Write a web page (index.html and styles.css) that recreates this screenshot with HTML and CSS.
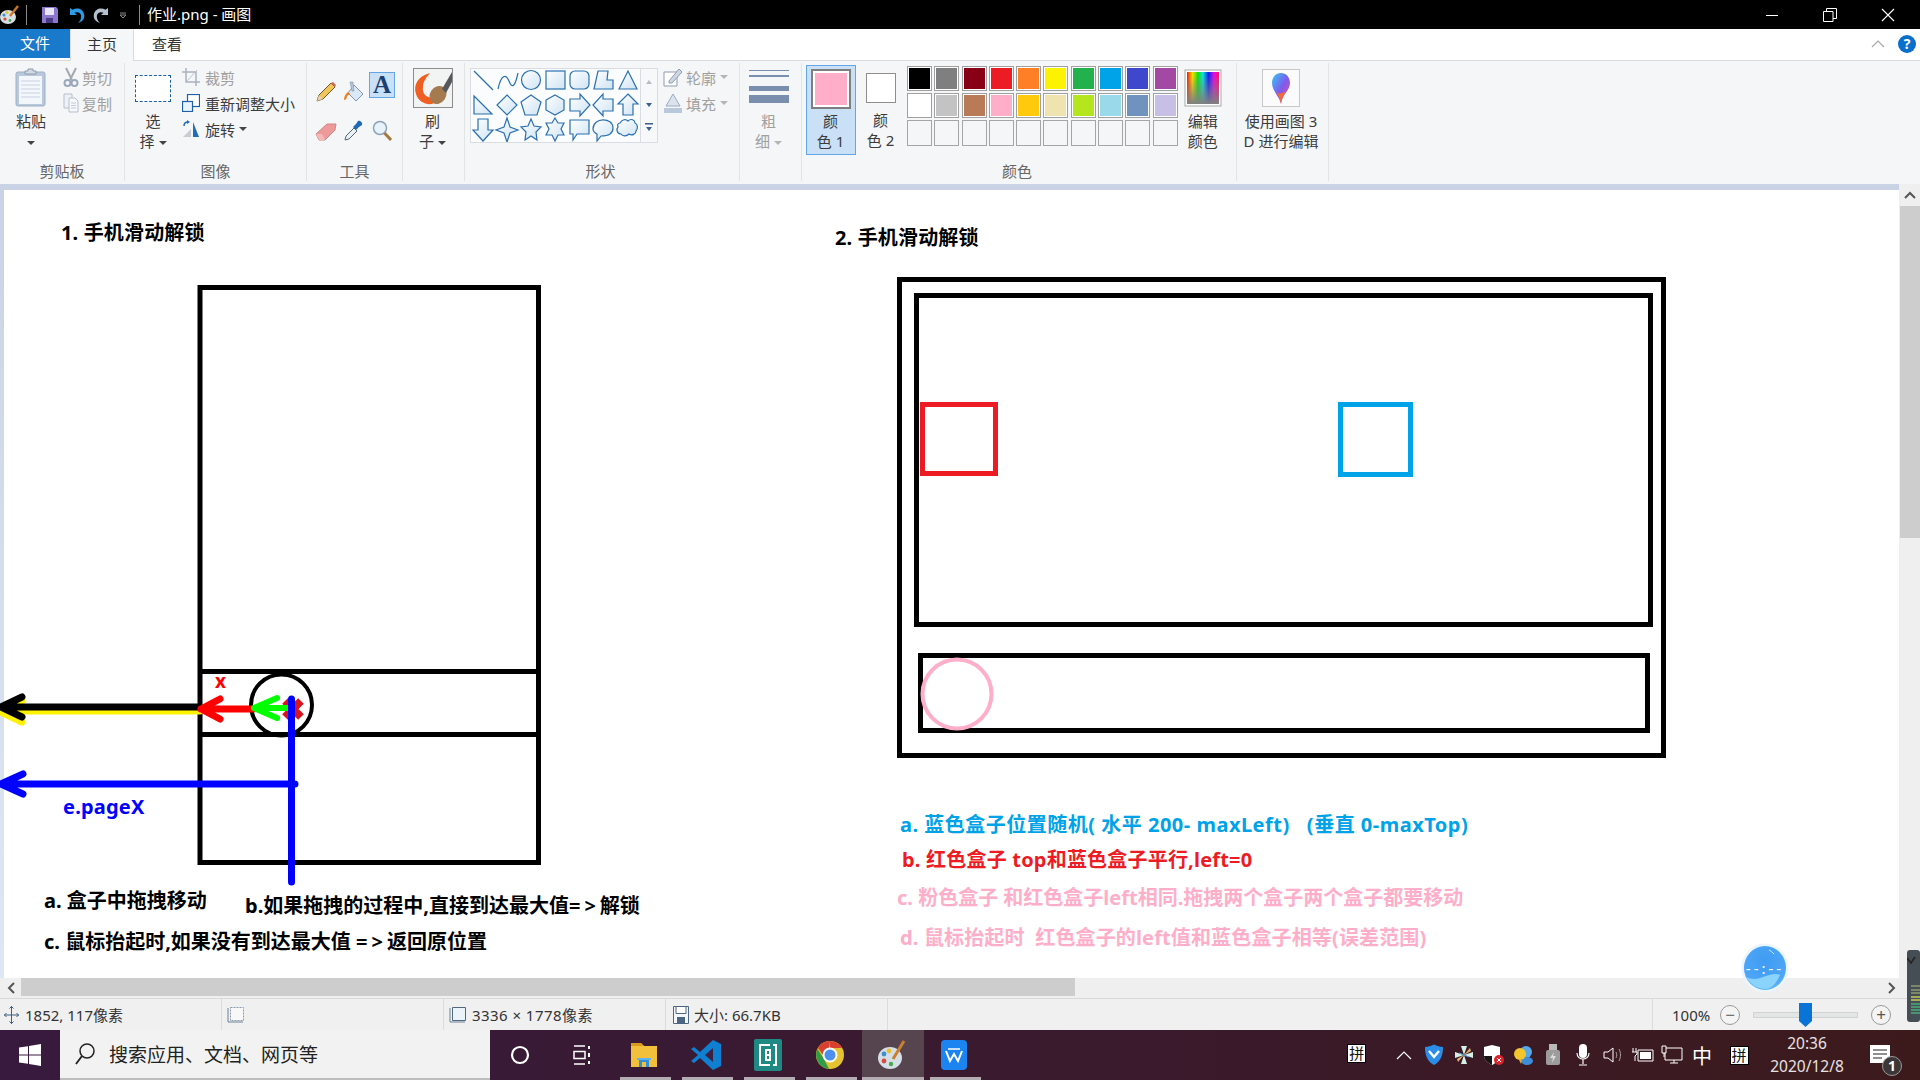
FILE: index.html
```html
<!DOCTYPE html>
<html lang="zh-CN">
<head>
<meta charset="utf-8">
<title>作业.png - 画图</title>
<link rel="stylesheet" href="styles.css">
</head>
<body>
<div class="app">
  <svg width="0" height="0" class="defs">
    <defs>
      <linearGradient id="shapeFill" x1="0" y1="0" x2="1" y2="1"><stop offset="0" stop-color="#ffffff"/><stop offset="1" stop-color="#cfe3f3"/></linearGradient>
      <linearGradient id="rainbow" x1="0" y1="0" x2="1" y2="0"><stop offset="0" stop-color="#ff1010"/><stop offset=".17" stop-color="#ffe000"/><stop offset=".34" stop-color="#10e010"/><stop offset=".5" stop-color="#10e0e0"/><stop offset=".67" stop-color="#1020f0"/><stop offset=".84" stop-color="#e010e0"/><stop offset="1" stop-color="#ff1060"/></linearGradient>
      <linearGradient id="fadeGray" x1="0" y1="0" x2="0" y2="1"><stop offset=".1" stop-color="#808080" stop-opacity="0"/><stop offset="1" stop-color="#808080"/></linearGradient>
      <linearGradient id="dropFill" x1="0" y1="0" x2="1" y2="1"><stop offset="0" stop-color="#35c9f0"/><stop offset=".5" stop-color="#7c5cf0"/><stop offset="1" stop-color="#f24f8e"/></linearGradient>
      <radialGradient id="ballFill" cx=".5" cy=".35" r=".75"><stop offset="0" stop-color="#3f9cf3"/><stop offset=".7" stop-color="#4ea6f6"/><stop offset="1" stop-color="#6cc4fb"/></radialGradient>
    </defs>
  </svg>

  <header class="titlebar">
    <svg class="qa-logo" width="20" height="20" viewBox="0 0 20 20"><ellipse cx="8" cy="12" rx="8" ry="7" fill="#d7e0e6"/><circle cx="4" cy="10" r="1.6" fill="#3f8fd0"/><circle cx="7" cy="7.5" r="1.6" fill="#e8c030"/><circle cx="5" cy="14" r="1.6" fill="#d84a3a"/><circle cx="10" cy="15.5" r="1.4" fill="#48a850"/><path d="M10 11 L18 1" stroke="#c8762a" stroke-width="2.4"/></svg>
    <span class="qa-sep qa-sep-a"></span>
    <svg class="qa-icon" width="18" height="18" viewBox="0 0 18 18"><path d="M1 1h14l2 2v14H1z" fill="#8f76cf"/><path d="M4 2h9v7H4z" fill="#e9e6f6"/><path d="M5 12h7v5H5z" fill="#4a3c86"/></svg>
    <svg class="qa-icon" width="18" height="18" viewBox="0 0 18 18"><path d="M3 2v7h7L7.500 6.800C11 5 15 7 14 12c-.4 2-1.400 3.500-3 5 5-1.500 7-5 6-9-1-5-7-7-11.500-4.200z" fill="#2e9be6"/></svg>
    <svg class="qa-icon" width="18" height="18" viewBox="0 0 18 18"><path d="M15 2v7H8l2.500-2.200C7 5 3 7 4 12c.4 2 1.400 3.500 3 5-5-1.500-7-5-6-9 1-5 7-7 11.500-4.200z" fill="#b4c2cf"/></svg>
    <svg class="qa-small" width="8" height="8" viewBox="0 0 8 8"><path d="M1 1h6M1 3l3 3 3-3z" fill="none" stroke="#8a8a8a"/></svg>
    <span class="qa-sep"></span>
    <span class="title-text">作业.png - 画图</span>
    <div class="win-ctrls">
      <svg width="14" height="14" viewBox="0 0 14 14" class="wc"><path d="M1 7.500h12" stroke="#fff" stroke-width="1"/></svg>
      <svg width="14" height="14" viewBox="0 0 14 14" class="wc"><path d="M.5 3.500h9.500v10h-9.500zM3.500 3V.500h10v10h-3.500" fill="none" stroke="#fff"/></svg>
      <svg width="14" height="14" viewBox="0 0 14 14" class="wc"><path d="M1 1l12 12M13 1L1 13" stroke="#fff" stroke-width="1.100"/></svg>
    </div>
  </header>

  <nav class="tabs">
    <span class="tab tab-file">文件</span>
    <span class="tab tab-home">主页</span>
    <span class="tab tab-view">查看</span>
    <svg class="tab-collapse" width="14" height="8" viewBox="0 0 14 8"><path d="M1 7l6-6 6 6" fill="none" stroke="#a8a8a8" stroke-width="1.200"/></svg>
    <span class="help">?</span>
  </nav>

  <section class="ribbon">
    <div class="group g-clip">
      <div class="group-body">
        <div class="big w-paste">
          <div class="big-icon"><svg width="34" height="40" viewBox="0 0 34 40"><rect x="2" y="4" width="29" height="34" rx="2" fill="#b9c8da" stroke="#9fb0c6"/><rect x="5" y="8" width="23" height="28" fill="#f3f6fb"/><path d="M7 13h19M7 17h19M7 21h19M7 25h19M7 29h19" stroke="#c6d3e4"/><path d="M11 6h11V3h-3V1h-5v2h-3z" fill="#d3dbe6" stroke="#8d9aac"/></svg></div>
          <span class="big-line">粘贴</span>
          <span class="big-line"><i class="caret"></i></span>
        </div>
        <div class="col col-clip">
          <div class="row off"><span class="row-ic"><svg width="16" height="20" viewBox="0 0 16 20"><path d="M3 1l6 12M13 1L7 13" stroke="#a4a9b1" stroke-width="2"/><circle cx="4.500" cy="16" r="3" fill="none" stroke="#9ba7bb" stroke-width="2"/><circle cx="11.500" cy="16" r="3" fill="none" stroke="#9ba7bb" stroke-width="2"/></svg></span>剪切</div>
          <div class="row off"><span class="row-ic"><svg width="16" height="20" viewBox="0 0 16 20"><path d="M1 1h8v14H1z" fill="#eef1f6" stroke="#b5bfce"/><path d="M6 5h6l3 3v11H6z" fill="#f6f8fb" stroke="#b5bfce"/><path d="M8 10h5M8 12.500h5M8 15h5" stroke="#c2cbd8"/></svg></span>复制</div>
        </div>
      </div>
      <div class="group-label">剪贴板</div>
    </div>

    <div class="group g-image">
      <div class="group-body">
        <div class="big w-select">
          <div class="big-icon"><span class="select-box"></span></div>
          <span class="big-line">选</span>
          <span class="big-line">择<i class="caret side"></i></span>
        </div>
        <div class="col col-image">
          <div class="row off"><span class="row-ic"><svg width="18" height="18" viewBox="0 0 18 18"><path d="M4 0v14h14M0 4h14v14" fill="none" stroke="#a9b2bf" stroke-width="1.500"/><path d="M5 13L15 2" stroke="#bbc3ce"/></svg></span>裁剪</div>
          <div class="row"><span class="row-ic"><svg width="18" height="18" viewBox="0 0 18 18"><rect x="5.500" y=".5" width="12" height="12" fill="#fff" stroke="#1e5fa8" stroke-width="1.200"/><rect x=".5" y="7.500" width="10" height="10" fill="#eaf3fb" stroke="#1e5fa8" stroke-width="1.200"/></svg></span>重新调整大小</div>
          <div class="row"><span class="row-ic"><svg width="18" height="18" viewBox="0 0 18 18"><path d="M1 17L9 9v8z" fill="#c9cdd2"/><path d="M11 2l6 15h-6z" fill="#1f6fb8"/><path d="M2 6c0-3 1-4 4-4" fill="none" stroke="#1f6fb8" stroke-width="1.500"/><path d="M5 0l3 2-3 2z" fill="#1f6fb8"/></svg></span>旋转<i class="caret side"></i></div>
        </div>
      </div>
      <div class="group-label">图像</div>
    </div>

    <div class="group g-tools">
      <div class="group-body tools-grid">
        <span class="tool"><svg width="22" height="22" viewBox="0 0 22 22"><path d="M2 20l2-6L16 2l4 4L8 18z" fill="#f0c65a" stroke="#6d5a2c"/><path d="M16 2l4 4 1-2-3-3z" fill="#d9665a"/><path d="M2 20l2-6 4 4z" fill="#e8d0a8"/></svg></span>
        <span class="tool"><svg width="22" height="22" viewBox="0 0 22 22"><path d="M11 4l9 9-7 7-8-8z" fill="#dbe9f6" stroke="#7e95b3"/><path d="M7 1h3l1 9H9z" fill="#b6c4d4" stroke="#7e95b3" stroke-width=".6"/><path d="M5 11c-3 2-4 5-4 8 2 0 3-2 3-4l3-2z" fill="#ef7d21"/></svg></span>
        <span class="tool tool-on"><span class="tool-a">A</span></span>
        <span class="tool"><svg width="22" height="22" viewBox="0 0 22 22"><path d="M1 14L12 4h9l-1 6L10 20H4z" fill="#ef9a9a" stroke="#d08585"/><path d="M1 14l3 6h6l-3-6z" fill="#f4b9b6"/></svg></span>
        <span class="tool"><svg width="22" height="22" viewBox="0 0 22 22"><path d="M2 20l1-4 8-8 3 3-8 8z" fill="#e8f0f8" stroke="#5a6570"/><path d="M10 7l3-3 2-3c2-1 5 2 4 4l-3 2-3 3z" fill="#1f69b5"/></svg></span>
        <span class="tool"><svg width="22" height="22" viewBox="0 0 22 22"><circle cx="9" cy="8" r="6.500" fill="#e8f2fb" stroke="#8ea2b7" stroke-width="1.500"/><path d="M13.500 13l6.500 7" stroke="#a5773f" stroke-width="3"/></svg></span>
      </div>
      <div class="group-label">工具</div>
    </div>

    <div class="group g-brush">
      <div class="group-body">
        <div class="big w-brush">
          <div class="big-icon"><svg width="40" height="40" viewBox="0 0 40 40"><rect x=".5" y=".5" width="39" height="39" fill="#f2f3f3" stroke="#8d8d8d"/><path d="M17 5C5 8 0 17 3 26c2 7 9 11 16 10 3-1 3-4 0-6-6-1-10-4-9-11 0-6 4-10 7-14z" fill="#ef5f22"/><ellipse cx="25" cy="27" rx="8" ry="9.500" transform="rotate(35 25 27)" fill="#a57a4f"/><path d="M29 21L39 4v10l-6 11z" fill="#55585c"/></svg></div>
          <span class="big-line">刷</span>
          <span class="big-line">子<i class="caret side"></i></span>
        </div>
      </div>
      <div class="group-label">工具</div>
    </div>

    <div class="group g-shapes">
      <div class="group-body">
        <div class="gallery">
          <svg width="170" height="75" viewBox="0 0 170 75">
            <g class="sh">
              <path d="M4 3l19 19"/>
              <path class="nf" d="M28 21c3-14 8-16 11-8s6 6 9-8"/>
              <ellipse cx="61" cy="12" rx="9.500" ry="9.500"/>
              <rect x="76" y="3" width="19" height="18"/>
              <rect x="100" y="3" width="19" height="18" rx="5"/>
              <path d="M124 21l4-18h10l-1 9h6v9z"/>
              <path d="M149 21l9-18 9 18z"/>
              <path d="M4 28l18 18H4z"/>
              <path d="M37 27l10 10-10 10-10-10z"/>
              <path d="M61 27l10 7-4 13H55l-4-13z"/>
              <path d="M85 27l9 5v10l-9 5-9-5V32z"/>
              <path d="M100 31h10v-5l10 11-10 11v-5h-10z"/>
              <path d="M143 31h-10v-5l-10 11 10 11v-5h10z"/>
              <path d="M158 26l10 10h-5v11h-10V36h-5z"/>
              <path d="M8 51h10v11h5L13 73 3 62h5z"/>
              <path d="M37 50l3 9 8 3-8 3-3 9-3-9-8-3 8-3z"/>
              <path d="M61 51l3 7 7 1-5 5 1 8-6-4-6 4 1-8-5-5 7-1z"/>
              <path d="M85 50l3 5 6 0-3 6 3 6-6 0-3 6-3-6-6 0 3-6-3-6 6 0z"/>
              <path d="M100 52h19v14h-12l-4 6v-6h-3z"/>
              <path d="M123 61c0-12 20-12 20-1 0 8-10 8-12 8l-4 5 0-7c-2-1-4-3-4-5z"/>
              <path d="M150 55c2-4 6-4 8-2 3-3 7-1 7 2 3 1 3 6 1 8 0 3-4 5-7 3-2 2-6 3-8 0-4 0-5-5-3-7-1-2 0-4 2-4z"/>
            </g>
          </svg>
        </div>
        <div class="gallery-scroll">
          <svg width="18" height="75" viewBox="0 0 18 75"><path d="M6 16l3-4 3 4z" fill="#b8bdc4"/><path d="M6 35l3 4 3-4z" fill="#3f5f90"/><path d="M5 55h8v1.500H5zM6 59h6l-3 4z" fill="#3f5f90"/></svg>
        </div>
        <div class="col col-shape">
          <div class="row off"><span class="row-ic"><svg width="20" height="20" viewBox="0 0 20 20"><path d="M1 5h13v14H1z" fill="#fff" stroke="#8d9cb0"/><path d="M6 14L16 2l3 3L9 16H6z" fill="#cfd7e2" stroke="#8d9cb0"/></svg></span>轮廓<i class="caret side pale"></i></div>
          <div class="row off"><span class="row-ic"><svg width="20" height="20" viewBox="0 0 20 20"><path d="M1 15h18v5H1z" fill="#b9c8dc"/><path d="M10 1l7 12H3z" fill="#dbe3ee" stroke="#9cabc0"/></svg></span>填充<i class="caret side pale"></i></div>
        </div>
      </div>
      <div class="group-label label-shapes">形状</div>
    </div>

    <div class="group g-size">
      <div class="group-body">
        <div class="big w-size off-text">
          <div class="big-icon top"><span class="size-lines"><i class="l1"></i><i class="l2"></i><i class="l3"></i><i class="l4"></i></span></div>
          <span class="big-line">粗</span>
          <span class="big-line">细<i class="caret side pale"></i></span>
        </div>
      </div>
      <div class="group-label hidden-label">粗细</div>
    </div>

    <div class="group g-colors">
      <div class="group-body">
        <div class="big color-btn on">
          <div class="big-icon"><span class="swatch-big"></span></div>
          <span class="big-line">颜</span>
          <span class="big-line">色 1</span>
        </div>
        <div class="big color-btn">
          <div class="big-icon"><span class="swatch-2"></span></div>
          <span class="big-line">颜</span>
          <span class="big-line">色 2</span>
        </div>
        <div class="palette">
          <i class="c c1"></i><i class="c c2"></i><i class="c c3"></i><i class="c c4"></i><i class="c c5"></i><i class="c c6"></i><i class="c c7"></i><i class="c c8"></i><i class="c c9"></i><i class="c c10"></i>
          <i class="c c11"></i><i class="c c12"></i><i class="c c13"></i><i class="c c14"></i><i class="c c15"></i><i class="c c16"></i><i class="c c17"></i><i class="c c18"></i><i class="c c19"></i><i class="c c20"></i>
          <i class="c e"></i><i class="c e"></i><i class="c e"></i><i class="c e"></i><i class="c e"></i><i class="c e"></i><i class="c e"></i><i class="c e"></i><i class="c e"></i><i class="c e"></i>
        </div>
        <div class="big w-edit">
          <div class="big-icon"><svg width="38" height="38" viewBox="0 0 38 38"><rect x="1" y="1" width="36" height="36" fill="#fff" stroke="#a8a8a8"/><rect x="3" y="3" width="32" height="32" fill="url(#rainbow)"/><rect x="3" y="3" width="32" height="32" fill="url(#fadeGray)"/></svg></div>
          <span class="big-line">编辑</span>
          <span class="big-line">颜色</span>
        </div>
      </div>
      <div class="group-label label-colors">颜色</div>
    </div>

    <div class="group g-3d">
      <div class="group-body">
        <div class="big w-3d">
          <div class="big-icon"><svg width="38" height="38" viewBox="0 0 38 38"><rect x=".5" y=".5" width="37" height="37" fill="#fbfbfb" stroke="#c8c8c8"/><path d="M19 35c-1-7-9-13-9-21 0-6 4-10 9-10s9 4 9 10c0 8-8 11-9 21z" fill="url(#dropFill)"/><path d="M19 35c-1-6-3-9-5-12 4 3 7 1 10-1-2 4-4 7-5 13z" fill="#f46b3c"/></svg></div>
          <span class="big-line">使用画图 3</span>
          <span class="big-line">D 进行编辑</span>
        </div>
      </div>
      <div class="group-label hidden-label">画图 3D</div>
    </div>
    <div class="ribbon-rest"></div>
  </section>

  <section class="workspace">
    <div class="work-top">
      <div class="pane">
        <div class="canvas">
          <svg class="drawing" width="1895" height="788" viewBox="4 190 1895 788">
            <g class="bk">
              <rect x="200" y="287.500" width="338.500" height="575"/>
              <path d="M198 671.500H541M198 734.500H541"/>
              <circle class="thin" cx="281.500" cy="705" r="30.500"/>
              <rect x="899.500" y="279.500" width="764" height="476"/>
              <rect x="916.500" y="295.500" width="734" height="329"/>
              <rect x="920.500" y="655.500" width="727" height="75"/>
            </g>
            <rect class="rd" x="922.500" y="404.500" width="73" height="69"/>
            <rect class="bl" x="1340.500" y="404.500" width="70" height="70"/>
            <circle class="pk" cx="957" cy="694" r="34.500"/>
            <path class="yl" d="M1 711H200M22 701L1 712 22 722"/>
            <path class="ak" d="M1 707H198M22 697L1 707 22 717"/>
            <path class="xr" d="M285 701L301 717M301 701L285 717"/>
            <path class="ar" d="M201 709H253M220 699L201 709 220 719"/>
            <path class="ag" d="M254 708H291M277 698L254 708 277 718"/>
            <path class="ab" d="M291.500 699V882M1 784H295M23 774L1 784 23 794"/>
          </svg>
          <span class="lb t-title1">1. 手机滑动解锁</span>
          <span class="lb t-title2">2. 手机滑动解锁</span>
          <span class="lb t-x">x</span>
          <span class="lb t-pagex">e.pageX</span>
          <span class="lb t-a">a. 盒子中拖拽移动</span>
          <span class="lb t-b">b.如果拖拽的过程中,直接到达最大值<span class="wide">=&gt;</span>解锁</span>
          <span class="lb t-c">c. 鼠标抬起时,如果没有到达最大值 <span class="wide">=&gt;</span>返回原位置</span>
          <span class="lb r-a">a. 蓝色盒子位置随机( 水平 200- maxLeft)&nbsp;&nbsp; (垂直 0-maxTop)</span>
          <span class="lb r-b">b. 红色盒子 top和蓝色盒子平行,left=0</span>
          <span class="lb r-c">c. 粉色盒子 和红色盒子left相同.拖拽两个盒子两个盒子都要移动</span>
          <span class="lb r-d">d. 鼠标抬起时&nbsp; 红色盒子的left值和蓝色盒子相等(误差范围)</span>
        </div>
      </div>
      <div class="vscroll">
        <span class="sb-btn"><svg width="12" height="8" viewBox="0 0 12 8"><path d="M1 7l5-5 5 5" fill="none" stroke="#555" stroke-width="2"/></svg></span>
        <span class="vthumb"></span>
      </div>
    </div>
    <div class="hscroll">
      <span class="hbtn"><svg width="8" height="12" viewBox="0 0 8 12"><path d="M7 1L2 6l5 5" fill="none" stroke="#555" stroke-width="2"/></svg></span>
      <span class="hthumb"></span>
      <span class="hbtn end"><svg width="8" height="12" viewBox="0 0 8 12"><path d="M1 1l5 5-5 5" fill="none" stroke="#555" stroke-width="2"/></svg></span>
    </div>
  </section>

  <footer class="status">
    <div class="st st1"><svg width="17" height="20" viewBox="0 0 17 20"><path d="M8.500 1v18M1 10h15M6.500 3.500l2-2 2 2M6.500 16.500l2 2 2-2M3.500 8l-2 2 2 2M13.500 8l2 2-2 2" fill="none" stroke="#3f5f85"/></svg><span>1852, 117像素</span></div>
    <div class="st st2"><svg width="18" height="18" viewBox="0 0 18 18"><path d="M3.500 1.500h13v13h-13z" fill="#f8f8f8" stroke="#8b9bb0" stroke-dasharray="2 1"/><path d="M1 2v14h15" fill="none" stroke="#6f8095"/></svg></div>
    <div class="st st3"><svg width="18" height="18" viewBox="0 0 18 18"><path d="M3.500 1.500h13v13h-13z" fill="#eaf2fa" stroke="#51687f"/><path d="M1 2v14h15" fill="none" stroke="#6f8095"/></svg><span class="dims">3336 × 1778像素</span></div>
    <div class="st st4"><svg width="16" height="18" viewBox="0 0 16 18"><path d="M.5.500h15v17H.5z" fill="#f2f6fa" stroke="#4c6580"/><path d="M3 .5h10v7H3z" fill="#fff" stroke="#4c6580"/><path d="M4 11h8v6.500H4z" fill="#4c6580"/></svg><span>大小: 66.7KB</span></div>
    <div class="st st5"></div>
    <div class="zoom">
      <span class="zoom-val">100%</span>
      <span class="zoom-btn">−</span>
      <span class="zoom-track"><svg class="zoom-thumb" width="14" height="24" viewBox="0 0 14 24"><path d="M0 0h13v18l-6.500 6L0 18z" fill="#0a74d6"/></svg></span>
      <span class="zoom-btn">+</span>
    </div>
  </footer>

  <footer class="taskbar">
    <div class="start"><svg width="22" height="22" viewBox="0 0 22 22"><path d="M0 3.500l9-1.300V10.500H0zM10 2l12-2v10.500H10zM0 11.500h9v8.300l-9-1.300zM10 11.500h12V22l-12-2z" fill="#fff"/></svg></div>
    <div class="search">
      <svg width="22" height="24" viewBox="0 0 22 24"><circle cx="13" cy="9" r="7" fill="none" stroke="#222" stroke-width="1.500"/><path d="M8 14L2 22" stroke="#222" stroke-width="1.800"/></svg>
      <span>搜索应用、文档、网页等</span>
    </div>
    <div class="tb"><svg width="20" height="20" viewBox="0 0 20 20"><circle cx="10" cy="10" r="8" fill="none" stroke="#fff" stroke-width="2.200"/></svg></div>
    <div class="tb"><svg width="18" height="20" viewBox="0 0 18 20"><path d="M1 1h11M1 19h11M1 6.500h11v7H1z" fill="none" stroke="#fff" stroke-width="1.500"/><path d="M16 1v3M16 8v4M16 16v3" stroke="#fff" stroke-width="2"/></svg></div>
    <div class="tb ind"><svg width="28" height="26" viewBox="0 0 28 26"><path d="M1 1h10l3 3h13v21H1z" fill="#f3c03c"/><path d="M1 1h10l3 3H1z" fill="#d99a1e"/><path d="M9 25v-9h10v9h-3v-5h-4v5z" fill="#2f8fd8"/><path d="M7 16h14v2H7z" fill="#5fb4ee"/></svg></div>
    <div class="tb ind"><svg width="32" height="32" viewBox="0 0 32 32"><path d="M23 1l8 4v22l-8 4-13-12-6 5-3-2 7-6-7-6 3-2 6 5z" fill="#0f7fd2"/><path d="M23 9l-8 7 8 7z" fill="#3c2040"/></svg></div>
    <div class="tb ind"><svg width="30" height="32" viewBox="0 0 30 32"><rect x="1" y="0" width="28" height="32" rx="2" fill="#1f8a83"/><path d="M6 5h11v2H8v18h9v2H6zM24 5h-4v2h2v18h-2v2h4z" fill="#fff"/><path d="M12 10h6v12h-6z M14 12v3h2v-3z M14 17v3h2v-3z" fill="#fff" fill-rule="evenodd"/></svg></div>
    <div class="tb ind"><svg width="28" height="28" viewBox="0 0 28 28"><circle cx="14" cy="14" r="14" fill="#e5c22f"/><path d="M14 0a14 14 0 0 1 12 7H14z" fill="#d9402f"/><path d="M2 7a14 14 0 0 1 12-7l-1 8-6 6z" fill="#d9402f"/><path d="M1.500 8L8 18l5 10A14 14 0 0 1 1.500 8z" fill="#2f9c47"/><circle cx="14" cy="14" r="6.500" fill="#4d8ff0" stroke="#fff" stroke-width="2"/></svg></div>
    <div class="tb ind active"><svg width="30" height="32" viewBox="0 0 30 32"><ellipse cx="13" cy="19" rx="12" ry="11" fill="#d4dee6"/><circle cx="7" cy="15" r="2.400" fill="#3f8fd0"/><circle cx="12" cy="12" r="2.400" fill="#e8c030"/><circle cx="7" cy="22" r="2.400" fill="#d84a3a"/><circle cx="14" cy="25" r="2.200" fill="#48a850"/><path d="M16 20L27 2" stroke="#c9802f" stroke-width="3"/></svg></div>
    <div class="tb ind"><svg width="28" height="32" viewBox="0 0 28 32"><rect x="1" y="1" width="26" height="30" rx="4" fill="#1b84f0"/><path d="M6 12l4 10 4-7 4 7 4-10" fill="none" stroke="#fff" stroke-width="2"/><path d="M8 10h12" stroke="#fff" stroke-width="1.500"/></svg></div>

    <div class="ime ime-a">拼</div>
    <div class="tray">
      <span class="ti"><svg width="16" height="10" viewBox="0 0 16 10"><path d="M1 9l7-7 7 7" fill="none" stroke="#fff" stroke-width="1.200"/></svg></span>
      <span class="ti"><svg width="20" height="22" viewBox="0 0 20 22"><path d="M1 3c3 0 6-1 9-2.500C13 2 16 3 19 3c0 8-2 14-9 18C3 17 1 11 1 3z" fill="#2a8ee8"/><path d="M5 7l5 6 5-6" fill="none" stroke="#fff" stroke-width="2.400"/></svg></span>
      <span class="ti"><svg width="20" height="20" viewBox="0 0 20 20"><path d="M10 10L7 1h6zM10 10l9-3v6zM10 10l3 9H7zM10 10l-9 3V7z" fill="#d6efe6"/><path d="M10 10L16 3l1 3zM10 10l-6 7-1-3z" fill="#e8b16e"/><path d="M5 8l5 2 5 2" stroke="#4d9fd6"/></svg></span>
      <span class="ti"><svg width="22" height="22" viewBox="0 0 22 22"><path d="M1 3l8-2 8 2v9c0 4-4 7-8 9-4-2-8-5-8-9z" fill="#fff"/><path d="M9 1v20c-4-2-8-5-8-9h8z" fill="#151515"/><circle cx="16" cy="16" r="5" fill="#d9262c"/><path d="M14 14l4 4M18 14l-4 4" stroke="#fff"/></svg></span>
      <span class="ti"><svg width="20" height="20" viewBox="0 0 20 20"><circle cx="13" cy="7" r="6" fill="#55a8ea"/><ellipse cx="14" cy="16" rx="6" ry="4" fill="#3d8dd8"/><circle cx="7" cy="9" r="6" fill="#f4c62e"/><path d="M6 15h3l-1 4z" fill="#e9a820"/></svg></span>
      <span class="ti"><svg width="14" height="22" viewBox="0 0 14 22"><rect x="3" y="0" width="8" height="6" fill="#b8b8b8"/><rect x="0" y="6" width="14" height="15" rx="2" fill="#9c9c9c"/><path d="M8 8l-4 6h3l-1 5 4-7H7z" fill="#dcdcdc"/></svg></span>
      <span class="ti"><svg width="14" height="22" viewBox="0 0 14 22"><rect x="3" y="0" width="8" height="14" rx="4" fill="#fff"/><path d="M1 9c0 8 12 8 12 0M7 15v5M3 21h8" fill="none" stroke="#fff" stroke-width="1.200"/></svg></span>
      <span class="ti"><svg width="20" height="18" viewBox="0 0 20 18"><path d="M1 6h4l5-4v14l-5-4H1z" fill="none" stroke="#fff"/><path d="M13 6c1 2 1 4 0 6M16 3c2 4 2 8 0 12" fill="none" stroke="#a9a0a0"/></svg></span>
      <span class="ti"><svg width="22" height="16" viewBox="0 0 22 16"><path d="M6 3h15v11H6z" fill="none" stroke="#fff"/><path d="M8 5h11v7H8z" fill="#fff"/><path d="M1 1v4M4 1v4M0 5h5v2l-2 2v5" fill="none" stroke="#fff"/></svg></span>
      <span class="ti"><svg width="22" height="20" viewBox="0 0 22 20"><path d="M4 3h17v12H4zM9 18h8M13 15v3" fill="none" stroke="#fff"/><path d="M1 1h4v7H1zM3 8v4" fill="#3b1a1f" stroke="#fff"/></svg></span>
      <span class="ti zh">中</span>
    </div>
    <div class="ime-wrap"><div class="ime">拼</div></div>
    <div class="clock"><span>20:36</span><span>2020/12/8</span></div>
    <div class="notify">
      <svg width="20" height="18" viewBox="0 0 20 18"><path d="M0 0h20v18H0z" fill="#fff"/><path d="M3 5h14M3 9h14M3 13h9" stroke="#222" stroke-width="1.200"/></svg>
      <span class="badge">1</span>
    </div>
  </footer>

  <div class="ball"><svg width="48" height="50" viewBox="0 0 48 50"><ellipse cx="24" cy="25" rx="23.500" ry="24.500" fill="#eaf5fd"/><ellipse cx="24" cy="25" rx="21" ry="22" fill="url(#ballFill)"/><path d="M5 34c8 4 14 1 20-1s10-3 14-1c-4 9-9 14-15 14-8 0-15-5-19-12z" fill="#8ad3fd"/><path d="M28 7c2 1 3 2 5 4" fill="none" stroke="#d7ecfc"/></svg><span>--:--</span></div>
  <div class="meter"><svg width="13" height="72" viewBox="0 0 13 72"><rect width="13" height="72" rx="3" fill="#454d55"/><path d="M4 36h9M4 40h9M4 43h9" stroke="#8e9a70" stroke-width="1.500"/><path d="M4 47h9M4 50h9" stroke="#c7c957" stroke-width="1.500"/><path d="M4 54h9M4 57h9M4 60h9M4 63h9" stroke="#49ad7c" stroke-width="1.500"/><path d="M0 8l4 5 4-6" fill="none" stroke="#222" stroke-width="1.500"/></svg></div>
</div>
</body>
</html>
```
FILE: styles.css
```css
* { box-sizing: border-box; }
html, body { margin: 0; padding: 0; }
body { width: 1920px; height: 1080px; overflow: hidden; font-family: "Noto Sans", "Noto Sans CJK SC", sans-serif; font-size: 15px; color: #3c3c3c; }
i { font-style: normal; display: inline-block; }
svg { display: block; flex: none; }
.defs { position: absolute; }
.app { position: relative; width: 1920px; height: 1080px; display: flex; flex-direction: column; background: #f0f0f0; }

/* title bar */
.titlebar { height: 29px; background: #000; color: #fff; display: flex; align-items: center; flex: none; }
.qa-sep { width: 1px; height: 20px; background: #8a8a8a; flex: none; }
.qa-sep-a { margin-left: 6px; margin-right: 14px; }
.qa-icon { margin-right: 8px; }
.qa-small { margin: 3px 12px 0 0; }
.title-text { margin-left: 7px; font-size: 15px; line-height: 29px; }
.win-ctrls { margin-left: auto; display: flex; align-items: center; gap: 44px; padding-right: 25px; }

/* tabs */
.tabs { height: 32px; background: #fff; border-bottom: 1px solid #dadbdc; display: flex; flex: none; align-items: flex-start; position: relative; }
.tab { font-size: 15px; text-align: center; line-height: 29px; height: 29px; }
.tab-file { width: 70px; background: #1979ca; color: #fff; }
.tab-home { width: 64px; height: 32px; background: #f5f6f7; border: 1px solid #dadbdc; border-bottom: 0; border-top: 0; line-height: 31px; color: #333; }
.tab-view { width: 66px; line-height: 31px; color: #333; }
.tab-collapse { margin-left: auto; margin-top: 11px; margin-right: 13px; }
.help { width: 18px; height: 18px; border-radius: 50%; background: #0a6fcb; color: #fff; font-weight: 700; font-size: 14px; line-height: 18px; text-align: center; margin-top: 6px; margin-right: 4px; }

/* ribbon */
.ribbon { height: 123px; background: #f5f6f7; display: flex; flex: none; }
.group { display: flex; flex-direction: column; margin: 2px 0 3px; border-right: 1px solid #e2e3e4; flex: none; }
.group-body { flex: 1; display: flex; min-height: 0; }
.group-label { height: 24px; flex: none; text-align: center; font-size: 15px; line-height: 28px; color: #666; }
.hidden-label { visibility: hidden; }
.label-shapes { padding-right: 3px; }
.label-colors { padding-right: 4px; }
.g-clip { width: 125px; }
.g-image { width: 182px; }
.g-tools { width: 96px; }
.g-brush { width: 62px; }
.g-brush .group-label { visibility: hidden; }
.g-shapes { width: 275px; }
.g-size { width: 62px; }
.g-colors { width: 435px; }
.g-3d { width: 92px; }
.ribbon-rest { flex: 1; }

.big { display: flex; flex-direction: column; align-items: center; flex: none; }
.big-icon { height: 48px; width: 100%; display: flex; align-items: center; justify-content: center; flex: none; padding-top: 2px; }
.big-line { font-size: 15px; line-height: 20px; height: 20px; white-space: nowrap; }
.caret { width: 0; height: 0; border: 4px solid transparent; border-top: 4px solid #444; border-bottom: 0; vertical-align: middle; }
.caret.side { margin-left: 4px; }
.caret.pale { border-top-color: #b5b5b5; }
.w-paste { width: 62px; }
.w-select { width: 46px; margin-left: 5px; }
.select-box { width: 36px; height: 27px; border: 1.5px dashed #1a5fa8; background: #fff; display: block; }
.col { display: flex; flex-direction: column; padding-top: 1px; flex: none; }
.col-image { margin-left: 6px; }
.col-clip .row-ic { margin-right: 2px; }
.row { height: 26px; display: flex; align-items: center; white-space: nowrap; font-size: 15px; }
.row-ic { width: 18px; margin-right: 5px; display: flex; justify-content: center; flex: none; }
.off { color: #a0a0a0; }
.off-text { color: #a0a0a0; }

.tools-grid { display: grid; grid-template-columns: repeat(3, 28px); grid-auto-rows: 39px; padding: 9px 0 0 5px; }
.tool { display: flex; align-items: center; justify-content: center; }
.tool-on { width: 26px; height: 26px; background: #c9e0f7; border: 1px solid #64a5e6; margin-left: 1px; }
.tool-a { font-family: "Liberation Serif", serif; font-weight: 700; font-size: 25px; line-height: 24px; color: #1c3f73; }
.w-brush { width: 61px; padding-right: 2px; }

.gallery { margin: 5px 0 0 5px; width: 170px; height: 75px; background: #fbfcfd; border: 1px solid #d9dde3; border-right: 0; flex: none; overflow: hidden; }
.gallery svg { margin: -1px 0 0 -1px; }
.sh path, .sh rect, .sh ellipse { fill: url(#shapeFill); stroke: #2a70b0; stroke-width: 1.200; }
.sh .nf { fill: none; }
.gallery-scroll { margin-top: 5px; width: 18px; height: 75px; background: #f7f8f9; border: 1px solid #d9dde3; flex: none; }
.gallery-scroll svg { margin: -1px 0 0 -1px; }
.col-shape { margin-left: 5px; }
.col-shape .row-ic { width: 20px; margin-right: 3px; }

.w-size { width: 57px; }
.big-icon.top { align-items: flex-start; padding-top: 7px; }
.size-lines { width: 40px; display: flex; flex-direction: column; }
.size-lines i { display: block; background: #7a8eae; }
.l1 { height: 1px; }
.l2 { height: 2px; margin-top: 4px; }
.l3 { height: 5px; margin-top: 9px; }
.l4 { height: 8px; margin-top: 4px; }

.color-btn { width: 50px; height: 90px; margin: 2px 0 0; padding-right: 1px; }
.g-colors .group-body { padding-left: 4px; }
.color-btn .big-icon { height: 45px; padding-top: 0; }
.color-btn.on { background: #c9e0f7; border: 1px solid #64a5e6; }
.swatch-big { width: 40px; height: 40px; background: #ffaec9; border: 2px solid #7f7f7f; box-shadow: inset 0 0 0 2px #fff; display: block; }
.swatch-2 { width: 30px; height: 30px; background: #fff; border: 1px solid #8e8e8e; display: block; }
.palette { display: grid; grid-template-columns: repeat(10, 25px); column-gap: 2.300px; grid-template-rows: 25px 25px 26px; row-gap: 2px; margin: 3px 0 0 1px; flex: none; height: 80px; }
.c { display: block; border: 1px solid #a0a0a0; box-shadow: inset 0 0 0 1px #fff; }
.e { border-color: #a5a5a5; box-shadow: none; background: #f5f6f7; }
.c1 { background: #000; } .c2 { background: #7f7f7f; } .c3 { background: #880015; } .c4 { background: #ed1c24; } .c5 { background: #ff7f27; }
.c6 { background: #fff200; } .c7 { background: #22b14c; } .c8 { background: #00a2e8; } .c9 { background: #3f48cc; } .c10 { background: #a349a4; }
.c11 { background: #fff; } .c12 { background: #c3c3c3; } .c13 { background: #b97a57; } .c14 { background: #ffaec9; } .c15 { background: #ffc90e; }
.c16 { background: #efe4b0; } .c17 { background: #b5e61d; } .c18 { background: #99d9ea; } .c19 { background: #7092be; } .c20 { background: #c8bfe7; }
.w-edit { width: 50px; margin-left: 0; }
.w-3d { width: 88px; }

/* workspace */
.workspace { flex: 1; display: flex; flex-direction: column; min-height: 0; }
.work-top { flex: 1; display: flex; min-height: 0; }
.pane { flex: 1; padding: 6px 0 0 4px; background: linear-gradient(#c9d3e5, #dde7f5); min-width: 0; }
.canvas { position: relative; width: 1895px; height: 788px; background: #fff; }
.drawing { position: absolute; left: 0; top: 0; overflow: visible; }
.bk rect, .bk path, .bk circle { fill: none; stroke: #000; stroke-width: 5; }
.bk .thin { stroke-width: 4; }
.rd, .bl { fill: none; stroke-width: 5; }
.rd { stroke: #ed1c24; }
.bl { stroke: #00a2e8; }
.pk { fill: none; stroke: #ffaec9; stroke-width: 4; }
.yl, .ak, .ar, .ag, .ab, .xr { fill: none; stroke-linecap: round; stroke-linejoin: round; stroke-width: 7; }
.yl { stroke: #fff200; }
.ak { stroke: #000; }
.ar { stroke: #ff0000; }
.ag { stroke: #00ff00; stroke-width: 6; }
.ab { stroke: #0000ff; }
.xr { stroke: #d8141c; stroke-width: 8; stroke-linecap: butt; }

.lb { position: absolute; white-space: pre; font-weight: 700; font-size: 20px; line-height: 28px; color: #000; font-family: "Noto Sans", "Noto Sans CJK SC", sans-serif; }
.wide { letter-spacing: 4px; }
.t-title1 { left: 57px; top: 29px; letter-spacing: .15px; }
.t-title2 { left: 831px; top: 34px; letter-spacing: .15px; }
.t-x { left: 211px; top: 477px; color: #f00; font-size: 19px; }
.t-pagex { left: 59px; top: 603px; color: #0000ff; letter-spacing: .2px; }
.t-a { left: 40px; top: 697px; }
.t-b { left: 241px; top: 702px; }
.t-c { left: 40px; top: 738px; }
.r-a { left: 896px; top: 621px; color: #00a2e8; letter-spacing: .5px; }
.r-b { left: 898px; top: 656px; color: #ed1c24; letter-spacing: .2px; }
.r-c { left: 893px; top: 694px; color: #ffaec9; }
.r-d { left: 896px; top: 734px; color: #ffaec9; letter-spacing: .14px; }

.vscroll { width: 21px; background: #efefef; display: flex; flex-direction: column; padding-left: 1px; flex: none; }
.sb-btn { height: 22px; display: flex; align-items: center; justify-content: center; }
.vthumb { height: 332px; background: #cdcdcd; display: block; }
.hscroll { height: 20px; background: #efefef; display: flex; flex: none; }
.hbtn { width: 21px; display: flex; align-items: center; justify-content: center; flex: none; }
.hbtn.end { margin-left: auto; width: 32px; justify-content: flex-start; }
.hthumb { width: 1054px; height: 18px; background: #cdcdcd; display: block; }

/* status bar */
.status { height: 32px; background: #f0f0f0; border-top: 1px solid #d9d9d9; display: flex; flex: none; align-items: stretch; font-size: 15px; color: #333; }
.st { display: flex; align-items: center; gap: 5px; border-right: 1px solid #dcdcdc; padding-left: 5px; white-space: nowrap; flex: none; }
.st1 { width: 222px; padding-left: 3px; }
.st2 { width: 222px; }
.st3 { width: 222px; }
.st4 { width: 222px; padding-left: 7px; }
.st5 { width: 765px; }
.dims { letter-spacing: .45px; }
.zoom { display: flex; align-items: center; flex: 1; padding-left: 19px; }
.zoom-val { width: 48px; }
.zoom-btn { width: 20px; height: 20px; border-radius: 50%; border: 1px solid #9a9a9a; background: #f4f4f4; display: flex; align-items: center; justify-content: center; font-size: 17px; line-height: 1; color: #555; flex: none; }
.zoom-track { width: 105px; height: 6px; margin: 0 13px; background: #e4e6e6; border: 1px solid #d0d3d3; position: relative; }
.zoom-thumb { position: absolute; left: 45px; top: -10px; }

/* taskbar */
.taskbar { height: 50px; flex: none; display: flex; align-items: stretch; background: linear-gradient(90deg, #381a3e, #3a1a2c 60%, #3c1a1c); color: #fff; position: relative; }
.start { width: 60px; display: flex; align-items: center; justify-content: center; }
.search { width: 430px; background: #f2f2f2; color: #222; border-bottom: 2px solid #bdbdbd; display: flex; align-items: center; gap: 13px; padding-left: 14px; font-size: 19px; flex: none; white-space: nowrap; }
.tb { width: 62px; display: flex; align-items: center; justify-content: center; flex: none; border-bottom: 3px solid transparent; padding: 3px 2px 0 0; }
.ind { position: relative; }
.ind::after { content: ""; position: absolute; left: 6px; right: 5px; bottom: -3px; height: 3px; background: #b3acb3; }
.active { background: #56444e; }
.active::after { left: 0; right: 0; }
.ime { width: 19px; height: 19px; background: #fff; color: #111; font-size: 15px; line-height: 17px; text-align: center; flex: none; border: 1px solid #000; }
.ime-a { margin: 14px 23px 0 auto; }
.tray { display: flex; align-items: center; flex: none; }
.ti { width: 29.800px; display: flex; align-items: center; justify-content: center; }
.zh { font-size: 20px; color: #fff; }
.ime-wrap { width: 44px; display: flex; align-items: center; justify-content: center; flex: none; }
.clock { width: 92px; display: flex; flex-direction: column; align-items: center; justify-content: center; gap: 3px; padding-bottom: 2px; font-size: 15.500px; line-height: 20px; color: #e8e2e2; flex: none; }
.notify { width: 67px; position: relative; padding: 15px 0 0 17px; flex: none; }
.badge { position: absolute; left: 29px; top: 26px; width: 20px; height: 20px; border-radius: 50%; background: #3b3638; border: 1px solid #9a9a9a; font-size: 14px; line-height: 18px; font-weight: 700; text-align: center; color: #fff; }

/* floating widgets */
.ball { position: absolute; left: 1741px; top: 943px; width: 48px; height: 50px; }
.ball span { position: absolute; left: 0; right: 0; top: 13px; text-align: center; color: #fff; font-size: 15px; line-height: 24px; letter-spacing: 3px; }
.meter { position: absolute; left: 1907px; top: 950px; }
```
